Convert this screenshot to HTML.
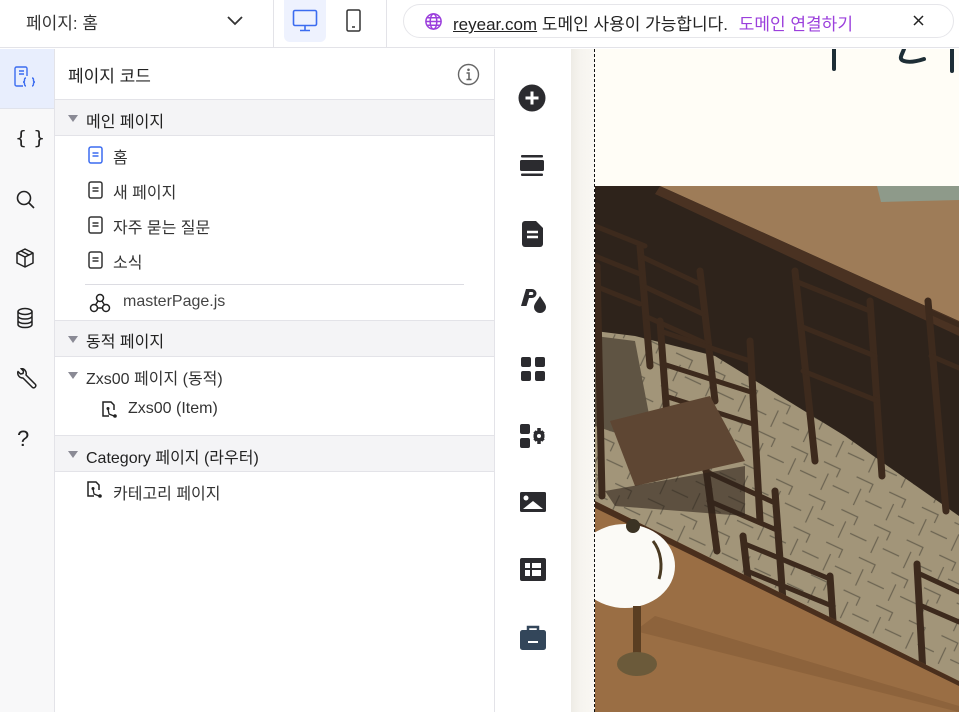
<!DOCTYPE html>
<html><head><meta charset="utf-8">
<style>
*{box-sizing:border-box;margin:0;padding:0}
body{width:959px;height:712px;overflow:hidden;background:#fff;font-family:"Liberation Sans","Noto Sans CJK KR",sans-serif;color:#222;position:relative}
.abs{position:absolute}
.top{left:0;top:0;width:959px;height:48px;border-bottom:1px solid #e3e3e8;background:#fff}
.txt{position:absolute;white-space:nowrap}
.row{position:absolute;left:55px;width:439px;}
.gray{background:#f4f4f6;border-top:1px solid #e3e3e8;border-bottom:1px solid #e3e3e8;height:37px}
.tri{position:absolute;width:0;height:0;border-left:5px solid transparent;border-right:5px solid transparent;border-top:7px solid #8a8a95}
</style></head><body>

<div class="abs top"></div>
<div class="txt" style="left:26px;top:9px;font-size:17px;color:#333">페이지: 홈</div>
<svg class="abs" style="left:226px;top:13px" width="18" height="14" viewBox="0 0 18 14"><path d="M2 4l7 7 7-7" fill="none" stroke="#333" stroke-width="1.8"/></svg>
<div class="abs" style="left:273px;top:0;width:1px;height:48px;background:#e3e3e8"></div>
<div class="abs" style="left:386px;top:0;width:1px;height:48px;background:#e3e3e8"></div>
<div class="abs" style="left:284px;top:0;width:42px;height:42px;background:#eef2fe;border-radius:0 0 6px 6px"></div>
<svg class="abs" style="left:292px;top:9px" width="26" height="24" viewBox="0 0 26 24"><rect x="1.5" y="1.5" width="23" height="15" rx="1.5" fill="none" stroke="#3b6cf0" stroke-width="1.6"/><path d="M13 17v4M8 21.5h10" stroke="#3b6cf0" stroke-width="1.6"/></svg>
<svg class="abs" style="left:345px;top:9px" width="18" height="24" viewBox="0 0 18 24"><rect x="2" y="1" width="13" height="21" rx="1.5" fill="none" stroke="#333" stroke-width="1.5"/><path d="M7 18h3" stroke="#333" stroke-width="1.5"/></svg>
<div class="abs" style="left:403px;top:4px;width:551px;height:34px;border:1px solid #e6e6ea;border-radius:17px;background:#fff"></div>
<svg class="abs" style="left:424px;top:12px" width="19" height="19" viewBox="0 0 20 20"><g fill="none" stroke="#9b3fdc" stroke-width="1.6"><circle cx="10" cy="10" r="8"/><ellipse cx="10" cy="10" rx="3.5" ry="8"/><path d="M2 10h16M3.5 6h13M3.5 14h13"/></g></svg>
<div class="txt" style="left:453px;top:10px;font-size:17px;color:#222"><span style="text-decoration:underline">reyear.com</span> 도메인 사용이 가능합니다. <span style="color:#9b3fdc;margin-left:6px">도메인 연결하기</span></div>
<svg class="abs" style="left:913px;top:15px" width="11" height="11" viewBox="0 0 11 11"><path d="M1 1l9 9M10 1l-9 9" stroke="#222" stroke-width="1.5"/></svg>

<!-- left rail -->
<div class="abs" style="left:0;top:49px;width:55px;height:663px;background:#f8f8f9;border-right:1px solid #e3e3e8"></div>
<div class="abs" style="left:0;top:49px;width:54px;height:60px;background:#e8eefd;border-bottom:1px solid #e0e3ec"></div>
<svg class="abs" style="left:13px;top:66px" width="24" height="26" viewBox="0 0 24 26"><g fill="none" stroke="#3b6cf0" stroke-width="1.4"><path d="M10 20H3.5a1.5 1.5 0 0 1-1.5-1.5v-16A1.5 1.5 0 0 1 3.5 1h9A1.5 1.5 0 0 1 14 2.5V10"/><path d="M6 5h5M6 8h5"/><path d="M13 12c-1.5 0-1.5 1-1.5 2.5S10.5 16 10 16c.5 0 1.5.3 1.5 1.5s0 2.5 1.5 2.5M19 12c1.5 0 1.5 1 1.5 2.5s1 1.5 1.5 1.5c-.5 0-1.5.3-1.5 1.5s0 2.5-1.5 2.5"/></g></svg>
<div class="txt" style="left:15px;top:127px;font-size:19px;color:#222;font-family:'DejaVu Sans',sans-serif">{ }</div>
<svg class="abs" style="left:15px;top:189px" width="22" height="22" viewBox="0 0 22 22"><circle cx="9" cy="9" r="6.5" fill="none" stroke="#222" stroke-width="1.6"/><path d="M14 14l5 5" stroke="#222" stroke-width="1.6"/></svg>
<svg class="abs" style="left:14px;top:247px" width="22" height="22" viewBox="0 0 22 22"><g fill="none" stroke="#222" stroke-width="1.5" stroke-linejoin="round"><path d="M11 2l8 4v10l-8 4-8-4V6z"/><path d="M3 6l8 4 8-4M11 10v10M7 4l8 4"/></g></svg>
<svg class="abs" style="left:15px;top:307px" width="20" height="22" viewBox="0 0 20 22"><g fill="none" stroke="#222" stroke-width="1.5"><ellipse cx="10" cy="4.5" rx="7" ry="3"/><path d="M3 4.5v13c0 1.7 3 3 7 3s7-1.3 7-3v-13M3 9c0 1.7 3 3 7 3s7-1.3 7-3M3 13.5c0 1.7 3 3 7 3s7-1.3 7-3"/></g></svg>
<svg class="abs" style="left:14px;top:368px" width="24" height="24" viewBox="0 0 24 24"><path d="M4 3.5l2.5 2.5 2.5-.5.5-2.5L7 .5A5 5 0 0 1 12 7l9.5 9.5a2.2 2.2 0 0 1-3 3L9 10A5 5 0 0 1 4 3.5z" fill="none" stroke="#222" stroke-width="1.5" stroke-linejoin="round"/></svg>
<div class="txt" style="left:17px;top:426px;font-size:22px;color:#222">?</div>

<!-- panel -->
<div class="abs" style="left:494px;top:49px;width:1px;height:663px;background:#e3e3e8"></div>
<div class="txt" style="left:68px;top:62px;font-size:17px;color:#222">페이지 코드</div>
<svg class="abs" style="left:457px;top:63px" width="23" height="23" viewBox="0 0 23 23"><circle cx="11.5" cy="11.5" r="10" fill="none" stroke="#666" stroke-width="1.4"/><circle cx="11.5" cy="6.8" r="1.3" fill="#666"/><path d="M9.5 10h2.5v6.5M9.5 16.5h5" stroke="#666" stroke-width="1.6" fill="none"/></svg>

<div class="row gray" style="top:99px"></div>
<div class="tri" style="left:68px;top:115px"></div>
<div class="txt" style="left:86px;top:108px;font-size:16px;color:#222">메인 페이지</div>

<svg class="abs" style="left:88px;top:146px" width="15" height="18" viewBox="0 0 15 18"><rect x="1" y="1" width="13" height="16" rx="2" fill="none" stroke="#3b6cf0" stroke-width="1.5"/><path d="M4.5 7h6M4.5 10h6" stroke="#3b6cf0" stroke-width="1.4"/></svg>
<div class="txt" style="left:113px;top:144px;font-size:16px;color:#333">홈</div>
<svg class="abs" style="left:88px;top:181px" width="15" height="18" viewBox="0 0 15 18"><rect x="1" y="1" width="13" height="16" rx="2" fill="none" stroke="#333" stroke-width="1.5"/><path d="M4.5 7h6M4.5 10h6" stroke="#333" stroke-width="1.4"/></svg>
<div class="txt" style="left:113px;top:179px;font-size:16px;color:#333">새 페이지</div>
<svg class="abs" style="left:88px;top:216px" width="15" height="18" viewBox="0 0 15 18"><rect x="1" y="1" width="13" height="16" rx="2" fill="none" stroke="#333" stroke-width="1.5"/><path d="M4.5 7h6M4.5 10h6" stroke="#333" stroke-width="1.4"/></svg>
<div class="txt" style="left:113px;top:214px;font-size:16px;color:#333">자주 묻는 질문</div>
<svg class="abs" style="left:88px;top:251px" width="15" height="18" viewBox="0 0 15 18"><rect x="1" y="1" width="13" height="16" rx="2" fill="none" stroke="#333" stroke-width="1.5"/><path d="M4.5 7h6M4.5 10h6" stroke="#333" stroke-width="1.4"/></svg>
<div class="txt" style="left:113px;top:249px;font-size:16px;color:#333">소식</div>
<div class="abs" style="left:85px;top:284px;width:379px;height:1px;background:#dcdce2"></div>
<svg class="abs" style="left:89px;top:293px" width="22" height="20" viewBox="0 0 22 20"><g fill="none" stroke="#222" stroke-width="1.5"><circle cx="11" cy="5" r="3.5"/><circle cx="5" cy="15" r="3.5"/><circle cx="17" cy="15" r="3.5"/><path d="M9 8l-2.5 4M13 8l2.5 4M8.5 15h5"/></g></svg>
<div class="txt" style="left:123px;top:293px;font-size:16px;color:#444">masterPage.js</div>

<div class="row gray" style="top:320px"></div>
<div class="tri" style="left:68px;top:336px"></div>
<div class="txt" style="left:86px;top:328px;font-size:16px;color:#222">동적 페이지</div>
<div class="tri" style="left:68px;top:372px"></div>
<div class="txt" style="left:86px;top:365px;font-size:16px;color:#333">Zxs00 페이지 (동적)</div>
<svg class="abs" style="left:100px;top:400px" width="20" height="20" viewBox="0 0 20 20"><g fill="none" stroke="#222" stroke-width="1.5"><path d="M9 16H3V2h8l3 3v5"/></g><circle cx="8" cy="8.5" r="1.5" fill="#222"/><circle cx="15" cy="16" r="1.8" fill="#222"/><path d="M8 9l1 5 5 2" stroke="#222" stroke-width="1.3" fill="none"/></svg>
<div class="txt" style="left:128px;top:400px;font-size:16px;color:#333">Zxs00 (Item)</div>

<div class="row gray" style="top:435px"></div>
<div class="tri" style="left:68px;top:451px"></div>
<div class="txt" style="left:86px;top:444px;font-size:16px;color:#222">Category 페이지 (라우터)</div>
<svg class="abs" style="left:85px;top:480px" width="20" height="20" viewBox="0 0 20 20"><g fill="none" stroke="#222" stroke-width="1.5"><path d="M9 16H3V2h8l3 3v5"/></g><circle cx="8" cy="8.5" r="1.5" fill="#222"/><circle cx="15" cy="16" r="1.8" fill="#222"/><path d="M8 9l1 5 5 2" stroke="#222" stroke-width="1.3" fill="none"/></svg>
<div class="txt" style="left:113px;top:480px;font-size:16px;color:#333">카테고리 페이지</div>

<!-- tool column icons -->
<svg class="abs" style="left:518px;top:84px" width="28" height="28" viewBox="0 0 28 28"><circle cx="14" cy="14" r="13.5" fill="#2b2b2f"/><path d="M14 7.5v13M7.5 14h13" stroke="#fff" stroke-width="3"/></svg>
<svg class="abs" style="left:520px;top:155px" width="24" height="22" viewBox="0 0 24 22"><rect x="1" y="0" width="22" height="2.5" rx="1" fill="#2b2b2f"/><rect x="0" y="5" width="24" height="11" rx="1.5" fill="#2b2b2f"/><rect x="1" y="18.5" width="22" height="2.5" rx="1" fill="#2b2b2f"/></svg>
<svg class="abs" style="left:522px;top:221px" width="22" height="26" viewBox="0 0 22 26"><path d="M3 0h11l7 7v16a3 3 0 0 1-3 3H3a3 3 0 0 1-3-3V3a3 3 0 0 1 3-3z" fill="#2b2b2f"/><path d="M5 11h11M5 16h11" stroke="#fff" stroke-width="2.5"/></svg>
<svg class="abs" style="left:520px;top:287px" width="28" height="26" viewBox="0 0 28 26"><path d="M1 19L6 2h6a4.5 4.5 0 0 1 0 9H9l-2.5 8z" fill="#2b2b2f"/><path d="M9.5 5h2.3a1.5 1.5 0 0 1 0 3H8.7z" fill="#fff"/><path d="M20 9c3 5 6 8 6 11a6 6 0 0 1-12 0c0-3 3-6 6-11z" fill="#2b2b2f"/></svg>
<svg class="abs" style="left:521px;top:357px" width="24" height="24" viewBox="0 0 24 24"><g fill="#2b2b2f"><rect x="0" y="0" width="10" height="10" rx="2"/><rect x="14" y="0" width="10" height="10" rx="2"/><rect x="0" y="14" width="10" height="10" rx="2"/><rect x="14" y="14" width="10" height="10" rx="2"/></g></svg>
<svg class="abs" style="left:520px;top:424px" width="28" height="24" viewBox="0 0 28 24"><g fill="#2b2b2f"><rect x="0" y="0" width="10" height="10" rx="2"/><rect x="0" y="14" width="10" height="10" rx="2"/></g><g stroke="#2b2b2f" stroke-width="3.5"><path d="M19 4v16M13 12h11.5M14.5 7.5l9 9M23.5 7.5l-9 9"/></g><circle cx="19" cy="12" r="5.5" fill="#2b2b2f"/><circle cx="19" cy="12" r="2" fill="#fff"/><rect x="10" y="0" width="3.5" height="24" fill="#fff"/></svg>
<svg class="abs" style="left:520px;top:492px" width="26" height="22" viewBox="0 0 26 22"><rect x="0" y="0" width="26" height="20" rx="1.5" fill="#2b2b2f"/><circle cx="6" cy="6" r="2.5" fill="#fff"/><path d="M3 17l10-8 10 8z" fill="#fff"/></svg>
<svg class="abs" style="left:520px;top:558px" width="26" height="24" viewBox="0 0 26 24"><rect x="0" y="0" width="26" height="23" rx="2" fill="#2b2b2f"/><rect x="5" y="5" width="5" height="5" fill="#fff"/><rect x="12" y="5" width="9" height="5" fill="#fff"/><rect x="5" y="12" width="5" height="6" fill="#fff"/><rect x="12" y="12" width="9" height="6" fill="#fff"/></svg>
<svg class="abs" style="left:520px;top:625px" width="26" height="26" viewBox="0 0 26 26"><path d="M8 5V2h10v3" fill="none" stroke="#33465a" stroke-width="2.5"/><rect x="0" y="5" width="26" height="20" rx="2.5" fill="#33465a"/><rect x="8" y="16" width="10" height="2" fill="#fff"/></svg>

<!-- canvas -->
<div class="abs" style="left:571px;top:49px;width:24px;height:663px;background:linear-gradient(90deg,#eeece6,#f6f4ef 40%,#faf8f3)"></div>
<div class="abs" style="left:595px;top:49px;width:364px;height:137px;background:#fffdf6"></div>
<svg class="abs" style="left:820px;top:49px" width="139" height="24" viewBox="0 0 139 24"><path d="M14 0v20" stroke="#1e2e36" stroke-width="4" stroke-linecap="round"/><path d="M84 0c-2 6-6 10 0 12s14 0 20-2" fill="none" stroke="#1e2e36" stroke-width="4" stroke-linecap="round"/><path d="M132 0v22" stroke="#1e2e36" stroke-width="4" stroke-linecap="round"/></svg>
<svg class="abs" style="left:595px;top:186px" width="364" height="526" viewBox="0 0 364 526">
<defs><pattern id="fl" width="36" height="36" patternUnits="userSpaceOnUse" patternTransform="rotate(25)"><rect width="36" height="36" fill="#a29579"/><path d="M0 9h18v9M18 27h18M9 18v18" stroke="#6c6452" stroke-width="1.2" fill="none"/></pattern></defs>
<rect width="364" height="526" fill="url(#fl)"/>
<!-- dark shadow under top table -->
<polygon points="0,0 65,0 364,135 364,330 250,250 120,170 40,150 0,145" fill="#2e231b"/>
<polygon points="0,150 40,155 60,260 0,240" fill="#5f5443"/>
<!-- top table -->
<polygon points="65,0 364,0 364,135" fill="#9e7c58"/>
<polygon points="65,0 364,135 364,150 60,8" fill="#4a3222"/>
<polygon points="282,0 364,0 364,14 286,16" fill="#8e9a8a"/>
<!-- chairs: strokes -->
<g stroke="#3d2a1d" stroke-linecap="round" fill="none">
<!-- chair A -->
<path d="M45 60l10 120M105 85l15 130" stroke-width="7"/>
<path d="M45 70l60 28M48 100l60 28M50 130l62 28" stroke-width="5"/>
<!-- left chair -->
<path d="M0 40l50 20M0 70l45 18M0 100l45 18" stroke-width="5"/>
<path d="M2 80l5 230" stroke-width="7"/>
<!-- chair B -->
<path d="M65 135l8 110M155 155l10 180" stroke-width="7"/>
<path d="M65 145l90 30M68 178l88 28M70 210l88 28" stroke-width="5"/>
<!-- chair E -->
<path d="M200 85l20 190M275 115l12 175" stroke-width="7"/>
<path d="M200 95l75 30M205 140l75 30M208 185l75 30" stroke-width="5"/>
<!-- chair F -->
<path d="M333 115l18 210" stroke-width="7"/>
<path d="M333 125l31 14M336 170l28 12" stroke-width="5"/>
<!-- chair C -->
<path d="M110 275l12 90M180 305l8 110" stroke-width="7"/>
<path d="M110 285l70 32M114 315l70 30" stroke-width="5"/>
<!-- chair D -->
<path d="M148 350l8 70M235 390l4 60" stroke-width="7"/>
<path d="M150 358l85 35M152 385l85 35" stroke-width="5"/>
<!-- chair G -->
<path d="M322 378l6 110" stroke-width="7"/>
<path d="M325 388l39 18M327 420l37 16" stroke-width="5"/>
</g>
<!-- seat -->
<polygon points="15,235 115,210 150,275 40,300" fill="#5e4633"/>
<polygon points="10,305 150,280 150,330 20,320" fill="#2e231b" opacity=".6"/>
<!-- bottom table -->
<polygon points="0,315 364,495 364,526 0,526" fill="#9a6e44"/>
<polygon points="0,315 364,495 364,500 0,322" fill="#4a2f1d"/>
<polygon points="60,430 364,520 364,526 40,445" fill="#7f5733" opacity=".5"/>
<!-- lamp -->
<ellipse cx="30" cy="380" rx="50" ry="42" fill="#fbfaf6"/>
<path d="M58 355c8 10 10 25 6 38" stroke="#4a3a22" stroke-width="3" fill="none"/>
<circle cx="38" cy="340" r="7" fill="#3b3324"/>
<rect x="38" y="420" width="8" height="50" fill="#5a3e22"/>
<ellipse cx="42" cy="478" rx="20" ry="12" fill="#6b5a3a"/>
</svg>
<div class="abs" style="left:594px;top:49px;width:0;height:663px;border-left:1.5px dashed #111"></div>
</body></html>
